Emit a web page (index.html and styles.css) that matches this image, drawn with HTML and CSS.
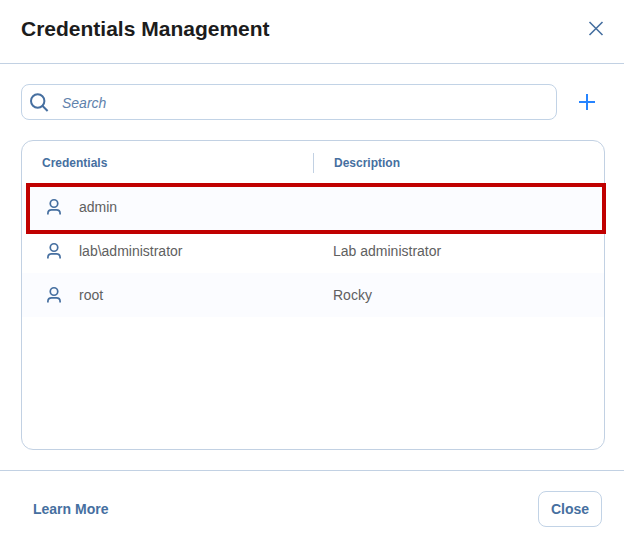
FILE: index.html
```html
<!DOCTYPE html>
<html lang="en">
<head>
<meta charset="utf-8">
<title>Credentials Management</title>
<link rel="stylesheet" href="styles.css">
</head>
<body>
<svg width="0" height="0" class="sprite" aria-hidden="true">
  <symbol id="user" viewBox="0 0 16 18">
    <circle cx="8" cy="5.5" r="3.75"/>
    <path d="M1.9 16.5V15.4C1.9 13.2 3.4 11.8 5.6 11.8H10.4C12.6 11.8 14.1 13.2 14.1 15.4V16.5"/>
  </symbol>
</svg>
<div class="dialog">
  <header class="dialog-header">
    <h1 class="title">Credentials Management</h1>
    <button class="icon-button" aria-label="Close dialog">
      <svg class="close-icon" width="16" height="16" viewBox="0 0 16 16"><path d="M1.5 2L14.5 15M14.5 2L1.5 15"/></svg>
    </button>
  </header>
  <main class="dialog-body">
    <div class="toolbar">
      <label class="search">
        <svg class="search-icon" width="20" height="20" viewBox="0 0 20 20"><circle cx="8.7" cy="9" r="6.7"/><path d="M13.4 13.8L18.6 19"/></svg>
        <span class="placeholder">Search</span>
      </label>
      <button class="icon-button" aria-label="Add">
        <svg class="add-icon" width="16" height="16" viewBox="0 0 16 16"><path d="M0 8H16M8 0V16"/></svg>
      </button>
    </div>
    <section class="table">
      <div class="head">
        <div class="head-cell first">Credentials</div>
        <div class="head-cell second">Description</div>
      </div>
      <div class="row shaded marked">
        <div class="name"><svg class="user" width="16" height="18"><use href="#user"/></svg><span>admin</span></div>
        <div class="description"></div>
      </div>
      <div class="row">
        <div class="name"><svg class="user" width="16" height="18"><use href="#user"/></svg><span>lab\administrator</span></div>
        <div class="description">Lab administrator</div>
      </div>
      <div class="row shaded">
        <div class="name"><svg class="user" width="16" height="18"><use href="#user"/></svg><span>root</span></div>
        <div class="description">Rocky</div>
      </div>
    </section>
  </main>
  <footer class="dialog-footer">
    <a class="learn">Learn More</a>
    <button class="close-button">Close</button>
  </footer>
</div>
</body>
</html>
```
FILE: styles.css
```css
*, *::after { box-sizing: border-box; }
body { margin: 0; background: #fff; font-family: "Liberation Sans", Arial, sans-serif; }
button { margin: 0; padding: 0; border: 0; background: none; font: inherit; }
svg { display: block; fill: none; stroke: #466fa0; }
.sprite { position: absolute; }
.dialog { display: flex; flex-direction: column; width: 624px; height: 541px; overflow: hidden; }
.dialog-header { display: flex; align-items: center; justify-content: space-between; height: 64px; padding: 0 20px 7px 21px; border-bottom: 1px solid #c2d1e3; }
.title { margin: 0; color: #1c1c1c; font-size: 21px; line-height: 24px; padding-top: 1px; }
.close-icon { stroke-width: 1.6; }
.dialog-body { flex: 1; display: flex; flex-direction: column; gap: 20px; padding: 20px 19px 20px 21px; }
.toolbar { display: flex; align-items: center; gap: 22px; }
.search { display: flex; align-items: center; gap: 13px; width: 536px; height: 36px; padding: 0 7px; border: 1px solid #c2d3e6; border-radius: 8px; }
.search-icon { stroke-width: 2; }
.placeholder { padding-top: 1px; color: #5f82ac; font-size: 14px; font-style: italic; }
.add-icon { stroke: #2684ff; stroke-width: 2; }
.table { flex: 1; border: 1px solid #c2d1e3; border-radius: 12px; }
.head { display: grid; grid-template-columns: 292px 1fr; align-items: center; height: 44px; color: #466fa0; font-size: 12px; font-weight: bold; }
.head-cell { height: 20px; line-height: 20px; padding-left: 20px; }
.first { border-right: 1px solid #c2d1e3; }
.row { display: grid; grid-template-columns: 291px 1fr; align-items: center; height: 44px; color: #606060; font-size: 14px; }
.shaded { background: #fbfcff; }
.marked { position: relative; box-shadow: 0 1px #fbfcff; }
.marked::after { content: ""; position: absolute; left: 4px; top: -2px; width: 580px; height: 51px; border: 4px solid #c00000; }
.name { display: flex; align-items: center; gap: 17px; padding-left: 24px; }
.user { stroke-width: 1.7; }
.description { padding-left: 20px; }
.dialog-footer { display: flex; align-items: center; justify-content: space-between; height: 71px; padding: 6px 22px 0 33px; border-top: 1px solid #c2d1e3; color: #466fa0; font-size: 14px; font-weight: bold; }
.close-button { width: 64px; height: 36px; border: 1px solid #c2d3e6; border-radius: 8px; color: #466fa0; }
```
